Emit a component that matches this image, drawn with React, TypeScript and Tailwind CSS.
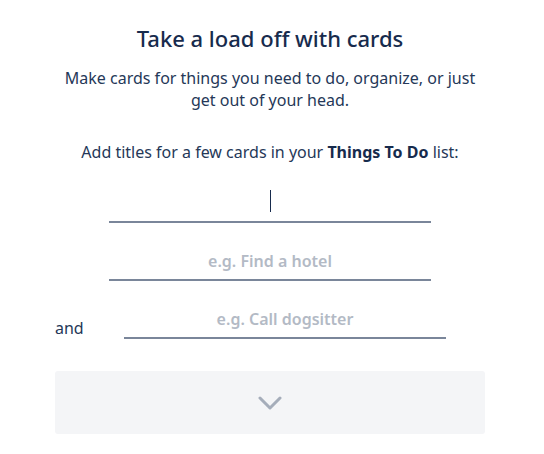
export default function App() {
  return (
    <div
      className="h-[454px] w-[544px] bg-white text-[#172b4d]"
      style={{ fontFamily: '"Noto Sans", "Liberation Sans", sans-serif' }}
    >
      <div className="ml-[55px] w-[430px] pt-[22px]">
        <h1 className="text-center text-[22px] font-medium leading-[32px]">Take a load off with cards</h1>
        <p className="mx-auto mt-[13px] w-[420px] text-center text-[16px] leading-[22px] text-[#253858]">
          Make cards for things you need to do, organize, or just get out of your head.
        </p>
        <p className="mt-[30px] text-center text-[16px] leading-[22px] text-[#253858]">
          Add titles for a few cards in your <b className="font-bold text-[#172b4d]">Things To Do</b> list:
        </p>
        <div className="mt-[18px] flex flex-col items-center gap-[16px]">
          <div className="relative flex h-[42px] w-[322px] items-center justify-center border-b-2 border-[#7a869a]">
            <span className="h-[22px] w-px bg-[#172b4d]" />
          </div>
          <input
            className="h-[42px] w-[322px] border-b-2 border-[#7a869a] bg-transparent pt-[4px] text-center text-[16px] font-semibold text-[#172b4d] outline-none placeholder:text-[#b3bac5]"
            placeholder="e.g. Find a hotel"
          />
        </div>
        <div className="mt-[16px] flex items-end">
          <span className="w-[69px] text-[16px] leading-[22px] text-[#253858]">and</span>
          <input
            className="h-[42px] w-[322px] border-b-2 border-[#7a869a] bg-transparent pt-[4px] text-center text-[16px] font-semibold text-[#172b4d] outline-none placeholder:text-[#b3bac5]"
            placeholder="e.g. Call dogsitter"
          />
        </div>
        <button className="mt-[32px] flex h-[63px] w-[430px] items-center justify-center rounded-[3px] bg-[#f4f5f7]">
          <svg width="24" height="14" viewBox="0 0 24 14" fill="none">
            <path d="M2 2l10 10L22 2" stroke="#a5adba" strokeWidth="3" strokeLinecap="round" strokeLinejoin="round" />
          </svg>
        </button>
      </div>
    </div>
  );
}
